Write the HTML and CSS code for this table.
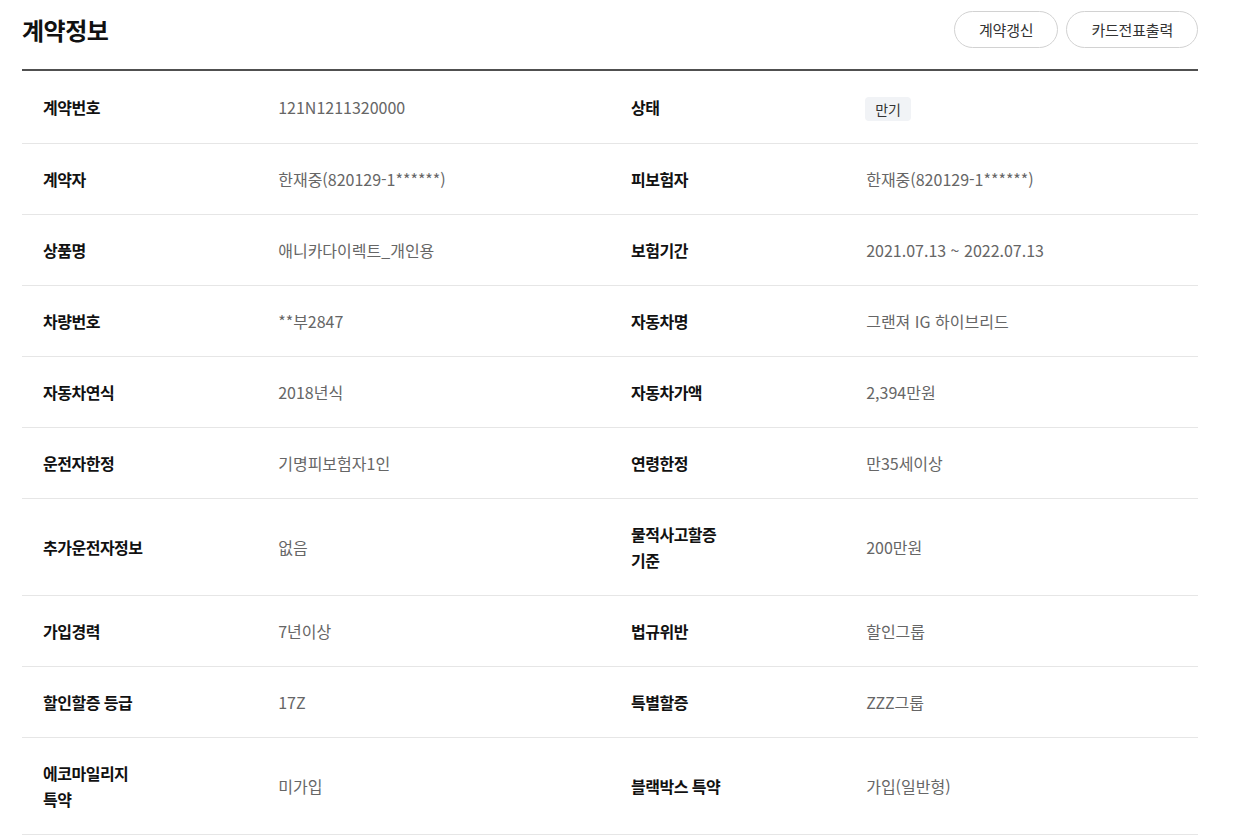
FILE: index.html
```html
<!DOCTYPE html>
<html lang="ko">
<head>
<meta charset="utf-8">
<title>계약정보</title>
<link rel="stylesheet" href="styles.css">
</head>
<body>
<div class="wrap">
  <div class="head">
    <h2 class="title">계약정보</h2>
    <div class="btns">
      <button class="btn">계약갱신</button>
      <button class="btn">카드전표출력</button>
    </div>
  </div>
  <div class="table">
    <div class="row">
      <div class="th"><span>계약번호</span></div><div class="td">121N1211320000</div>
      <div class="th"><span>상태</span></div><div class="td"><span class="badge">만기</span></div>
    </div>
    <div class="row">
      <div class="th"><span>계약자</span></div><div class="td">한재중(820129-1******)</div>
      <div class="th"><span>피보험자</span></div><div class="td">한재중(820129-1******)</div>
    </div>
    <div class="row">
      <div class="th"><span>상품명</span></div><div class="td">애니카다이렉트_개인용</div>
      <div class="th"><span>보험기간</span></div><div class="td">2021.07.13 ~ 2022.07.13</div>
    </div>
    <div class="row">
      <div class="th"><span>차량번호</span></div><div class="td">**부2847</div>
      <div class="th"><span>자동차명</span></div><div class="td">그랜져 IG 하이브리드</div>
    </div>
    <div class="row">
      <div class="th"><span>자동차연식</span></div><div class="td">2018년식</div>
      <div class="th"><span>자동차가액</span></div><div class="td">2,394만원</div>
    </div>
    <div class="row">
      <div class="th"><span>운전자한정</span></div><div class="td">기명피보험자1인</div>
      <div class="th"><span>연령한정</span></div><div class="td">만35세이상</div>
    </div>
    <div class="row">
      <div class="th"><span>추가운전자정보</span></div><div class="td">없음</div>
      <div class="th"><span>물적사고할증 기준</span></div><div class="td">200만원</div>
    </div>
    <div class="row">
      <div class="th"><span>가입경력</span></div><div class="td">7년이상</div>
      <div class="th"><span>법규위반</span></div><div class="td">할인그룹</div>
    </div>
    <div class="row">
      <div class="th"><span>할인할증 등급</span></div><div class="td">17Z</div>
      <div class="th"><span>특별할증</span></div><div class="td">ZZZ그룹</div>
    </div>
    <div class="row">
      <div class="th"><span>에코마일리지 특약</span></div><div class="td">미가입</div>
      <div class="th"><span>블랙박스 특약</span></div><div class="td">가입(일반형)</div>
    </div>
  </div>
</div>
</body>
</html>
```
FILE: styles.css
```css
* { box-sizing: border-box; }
html, body { margin: 0; padding: 0; background: #fff; }
body {
  font-family: "Noto Sans CJK KR", "Noto Sans", sans-serif;
  color: #111;
}
.wrap {
  width: 1176px;
  margin-left: 22px;
}
.head {
  display: flex;
  justify-content: space-between;
  align-items: flex-start;
  height: 71px;
  border-bottom: 2px solid #505050;
}
.title {
  margin: 16px 0 0;
  font-size: 24px;
  font-weight: 700;
  letter-spacing: -0.5px;
  color: #111;
  line-height: 28px;
}
.btns {
  display: flex;
  gap: 8px;
  margin-top: 11px;
}
.btn {
  font-family: inherit;
  height: 37px;
  padding: 0 24px;
  border: 1px solid #d2d2d2;
  border-radius: 19px;
  background: #fff;
  color: #333;
  font-size: 15px;
  line-height: 1;
  letter-spacing: -0.2px;
}
.row {
  display: grid;
  grid-template-columns: 20% 30% 20% 30%;
  align-items: center;
  border-bottom: 1px solid #e6e6e6;
  padding: 22px 0;
}
.th {
  padding-left: 21px;
  font-size: 16px;
  font-weight: 700;
  line-height: 26px;
  color: #111;
  letter-spacing: -0.5px;
  word-break: keep-all;
}
.th span {
  display: block;
  max-width: 112px;
}
.td {
  padding-left: 21px;
  font-size: 16px;
  line-height: 26px;
  color: #666;
  letter-spacing: 0;
}
.badge {
  display: inline-block;
  vertical-align: middle;
  background: #f1f3f6;
  border-radius: 4px;
  padding: 0 10px;
  height: 24px;
  line-height: 24px;
  font-size: 14px;
  color: #333;
  margin-left: -1px;
}
```
